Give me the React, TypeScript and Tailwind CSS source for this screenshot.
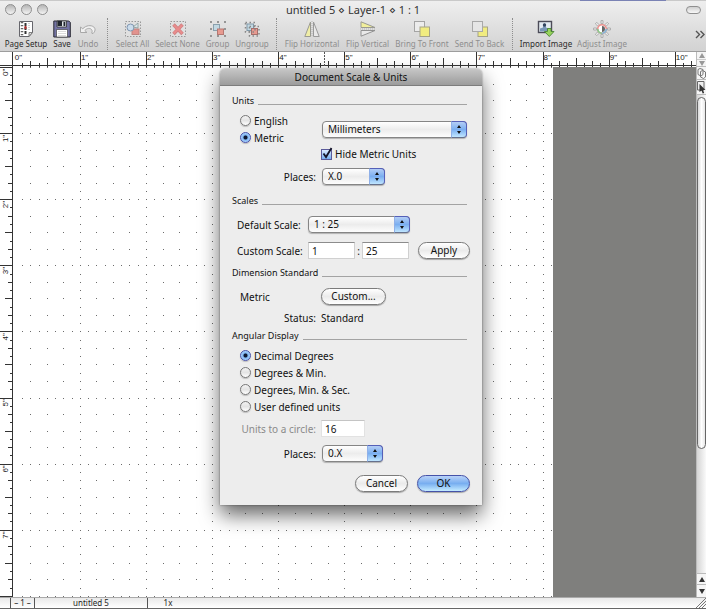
import React, { useState } from "react";

const INCH = 66.1;
const ORIGIN_X = 13.8;
const RULER_LEFT = 13;

/* ---------- Toolbar icons ---------- */

const PageSetupIcon = () => (
  <svg width="18" height="18" viewBox="0 0 18 18">
    <path d="M2.500 1.500h13v11l-3.500 4h-9.500z" fill="#fff" stroke="#66666c" />
    <path d="M15.500 12.500l-3.500 4v-4z" fill="#ddd" stroke="#666" strokeWidth=".8" />
    <path d="M5 2v14" stroke="#666" strokeWidth="2.500" strokeDasharray="1.200 1.800" />
    <path d="M8.500 3v11" stroke="#333" strokeWidth="2" strokeDasharray="3 1" />
    <path d="M8.500 6v3" stroke="#b03030" strokeWidth="2" />
    <path d="M12 3v8" stroke="#aaa" strokeDasharray="1 1" />
  </svg>
);

const SaveIcon = () => (
  <svg width="18" height="18" viewBox="0 0 18 18">
    <path d="M.8 1h15l1.500 1.500V17H.8z" fill="#7474a4" stroke="#2a2a34" />
    <path d="M4 1h9.500v6H4z" fill="#dfe5e8" stroke="#333" strokeWidth=".8" />
    <path d="M4.500 1h4.500v5H4.500z" fill="#20242c" />
    <path d="M10.500 2h1.800v4h-1.800z" fill="#20242c" />
    <path d="M3.500 9.500h11V17h-11z" fill="#fff" stroke="#333" strokeWidth=".6" />
    <path d="M5 11.500h8M5 13.500h8M5 15.500h8" stroke="#ccc" strokeWidth=".7" />
  </svg>
);

const UndoIcon = () => (
  <svg width="18" height="18" viewBox="0 0 18 18">
    <path
      d="M1.500 7v5.500h6.500L5.800 10.500C8 8 11 7.800 12.500 9.500c.8 1 .8 2.300.2 3.600l1.300.5c2.300-2.300 2.800-4.800.8-6.600C12 4.800 7 5.200 3.800 8.800z"
      fill="#f1f1f1"
      stroke="#a8a8a8"
    />
  </svg>
);

const SelectAllIcon = () => (
  <svg width="18" height="18" viewBox="0 0 18 18">
    <rect x="1.500" y="1.500" width="15" height="15" fill="#e0e0e0" stroke="#999" strokeDasharray="1.500 1.500" />
    <rect x="8" y="9" width="7" height="5.500" fill="#e2928e" stroke="#c08480" />
    <circle cx="6.500" cy="7.500" r="3.500" fill="#cbdcec" stroke="#7f96b0" />
    <path d="M9 7l5-4v5z" fill="#d8e4e8" stroke="#899" strokeWidth=".8" />
  </svg>
);

const SelectNoneIcon = () => (
  <svg width="18" height="18" viewBox="0 0 18 18">
    <rect x="1.500" y="1.500" width="15" height="15" fill="#e0e0e0" stroke="#999" strokeDasharray="1.500 1.500" />
    <path d="M4.500 4.500l9 9.500M13.500 4.500l-9 9.500" stroke="#cf8082" strokeWidth="3.500" />
    <path d="M4.800 5l8.500 8.500M13.200 5l-8.500 8.500" stroke="#e88c8c" strokeWidth="2" />
  </svg>
);

const GroupIcon = () => (
  <svg width="18" height="18" viewBox="0 0 18 18">
    <rect x="4.500" y="4.500" width="6" height="6" fill="#c2d8e2" stroke="#8aa0ad" />
    <rect x="8.500" y="9" width="6" height="5.500" fill="#e79a90" stroke="#b57872" />
    <path
      d="M1 1h2v2H1zM8 1h2v2H8zM15 1h2v2h-2zM1 8h2v2H1zM15 8h2v2h-2zM1 15h2v2H1zM8 15h2v2H8zM15 15h2v2h-2z"
      fill="#959595"
    />
  </svg>
);

const UngroupIcon = () => (
  <svg width="18" height="18" viewBox="0 0 18 18">
    <rect x="4" y="4" width="6.500" height="6.500" fill="#c2d8e2" stroke="#8098a8" />
    <rect x="8.500" y="8.500" width="6" height="6" fill="#e79a90" stroke="#a5706c" />
    <rect x="2.500" y="2.500" width="9.500" height="9.500" fill="none" stroke="#888" strokeWidth="1.500" strokeDasharray="1.500 2.500" />
    <rect x="6.500" y="6.500" width="9.500" height="9.500" fill="none" stroke="#888" strokeWidth="1.500" strokeDasharray="1.500 2.500" />
  </svg>
);

const FlipHIcon = () => (
  <svg width="18" height="18" viewBox="0 0 18 18">
    <path d="M7.500 2v14.500H1.800z" fill="#efeda6" stroke="#9a9a92" />
    <path d="M10.500 2v14.500h5.700z" fill="#e9e9e9" stroke="#9a9a9a" />
    <path d="M9 1v16" stroke="#b5b5b5" strokeDasharray="1 1" />
  </svg>
);

const FlipVIcon = () => (
  <svg width="18" height="18" viewBox="0 0 18 18">
    <path d="M2 7.500V1.800l14 5.700z" fill="#f1ef9c" stroke="#9a9a92" />
    <path d="M2 10.500v5.700l14-5.700z" fill="#e9e9e9" stroke="#929292" />
    <path d="M1 9h16" stroke="#b5b5b5" strokeDasharray="1 1" />
  </svg>
);

const FrontIcon = () => (
  <svg width="18" height="18" viewBox="0 0 18 18">
    <rect x="1.500" y="1.500" width="10" height="10" fill="#ececec" stroke="#a4a4a4" />
    <rect x="7" y="7" width="9.500" height="9.500" fill="#f1ec80" stroke="#a5a388" />
  </svg>
);

const BackIcon = () => (
  <svg width="18" height="18" viewBox="0 0 18 18">
    <rect x="7" y="7" width="9.500" height="9.500" fill="#f1ec80" stroke="#a5a388" />
    <rect x="1.500" y="1.500" width="10" height="10" fill="#e6e6e6" stroke="#a8a8a8" />
  </svg>
);

const ImportIcon = () => (
  <svg width="18" height="18" viewBox="0 0 18 18">
    <rect x="1.500" y="1.500" width="13" height="11" fill="#e4ebf2" stroke="#4c4c58" strokeWidth="1.400" />
    <path d="M3 11.500V8.500l3-1V4.500q1.500-2 3 0V7.500l3 1v3z" fill="#7a98b8" />
    <circle cx="7.500" cy="5" r="1.700" fill="#34455e" />
    <path d="M10.500 8.500h3.500v3h3L12.300 16.500l-4.800-5h3z" fill="#98d45c" stroke="#4a8434" strokeWidth=".9" />
  </svg>
);

const AdjustIcon = () => (
  <svg width="18" height="18" viewBox="0 0 18 18">
    {[0, 45, 90, 135, 180, 225, 270, 315].map((a) => (
      <path key={a} d="M8 .6h2v3H8z" fill="#eee" stroke="#a0a0a0" strokeWidth=".8" transform={`rotate(${a} 9 9)`} />
    ))}
    <circle cx="9" cy="9" r="4.300" fill="#fff" stroke="#eb8f8c" strokeWidth="1.600" />
    <path d="M4.700 9A4.300 4.300 0 0 0 9 13.300" fill="none" stroke="#86c98c" strokeWidth="1.600" />
    <path d="M13.300 9A4.300 4.300 0 0 1 9 13.300" fill="none" stroke="#7fb8dc" strokeWidth="1.600" />
    <path d="M9 6a3 3 0 0 1 0 6z" fill="#666" />
  </svg>
);

type Tool = { label: string; icon: () => React.JSX.Element; width: string; enabled?: boolean };

const toolGroups: Tool[][] = [
  [
    { label: "Page Setup", icon: PageSetupIcon, width: "w-12", enabled: true },
    { label: "Save", icon: SaveIcon, width: "w-6", enabled: true },
    { label: "Undo", icon: UndoIcon, width: "w-7" },
  ],
  [
    { label: "Select All", icon: SelectAllIcon, width: "w-[41px]" },
    { label: "Select None", icon: SelectNoneIcon, width: "w-[49px]" },
    { label: "Group", icon: GroupIcon, width: "w-[31px]" },
    { label: "Ungroup", icon: UngroupIcon, width: "w-[38px]" },
  ],
  [
    { label: "Flip Horizontal", icon: FlipHIcon, width: "w-[62px]" },
    { label: "Flip Vertical", icon: FlipVIcon, width: "w-[49px]" },
    { label: "Bring To Front", icon: FrontIcon, width: "w-[60px]" },
    { label: "Send To Back", icon: BackIcon, width: "w-[55px]" },
  ],
  [
    { label: "Import Image", icon: ImportIcon, width: "w-[58px]", enabled: true },
    { label: "Adjust Image", icon: AdjustIcon, width: "w-[54px]" },
  ],
];

function Header() {
  return (
    <header className="shrink-0 border-b border-[#9d9d9d] bg-linear-to-b from-[#efefef] to-[#d2d2d2]">
      <div className="flex h-px justify-end bg-[#c9c9c9] pr-10">
        <div className="w-[86px] bg-[#7a82b4]" />
      </div>
      <div className="grid h-[17px] grid-cols-[1fr_auto_1fr] items-center px-[5px]">
        <div className="flex gap-[5px]">
          {["Close", "Minimize", "Zoom"].map((n) => (
            <button
              key={n}
              aria-label={n}
              className="size-[11px] rounded-full border border-[#8f8f8f] bg-linear-to-b from-[#b5b5b5] to-[#f4f4f4]"
            />
          ))}
        </div>
        <h1 className="text-[11px] leading-4 whitespace-nowrap text-[#333]">untitled 5 ⋄ Layer-1 ⋄ 1 : 1</h1>
        <button
          aria-label="Toggle toolbar"
          className="h-2 w-[15px] justify-self-end rounded-full border border-[#8f8f8f] bg-linear-to-b from-[#d0d0d0] to-[#f8f8f8]"
        />
      </div>
      <div className="flex h-[33px] items-start overflow-hidden pl-[2px]">
        {toolGroups.map((group, i) => (
          <React.Fragment key={i}>
            {i > 0 && <div className="mr-1 ml-[5px] h-8 shrink-0 border-l border-dotted border-[#8d8d8d]" />}
            {group.map(({ label, icon: Icon, width, enabled }) => (
              <button
                key={label}
                disabled={!enabled}
                className={`flex shrink-0 flex-col items-center pt-[2px] ${width} ${enabled ? "text-[#2a2a2a]" : "text-[#8e8e8e]"}`}
              >
                <Icon />
                <span className="text-[8px] leading-[11px] whitespace-nowrap">{label}</span>
              </button>
            ))}
          </React.Fragment>
        ))}
        <button aria-label="More tools" className="mt-3 mr-px ml-auto shrink-0">
          <svg width="10" height="9" viewBox="0 0 10 9" fill="none" stroke="#555" strokeWidth="1.400">
            <path d="M1 1l3.500 3.500L1 8M5.500 1L9 4.500 5.500 8" />
          </svg>
        </button>
      </div>
    </header>
  );
}

/* ---------- Drawing area ---------- */

const tickLength = (i: number) => (i % 8 === 0 ? 14 : i % 4 === 0 ? 8 : i % 2 === 0 ? 5 : 3);

function HorizontalRuler() {
  return (
    <svg className="block h-[15px] w-full bg-white font-['Liberation_Sans',sans-serif]" aria-hidden="true">
      <rect x="0" y="13" width="100%" height="1" fill="#333" />
      {Array.from({ length: 160 }, (_, i) => (
        <rect
          key={i}
          x={i === 0 ? 12 : Math.round(ORIGIN_X + (i * INCH) / 8)}
          y={14 - tickLength(i)}
          width="1"
          height={tickLength(i) + 1}
          fill="#333"
        />
      ))}
      {Array.from({ length: 11 }, (_, n) => (
        <text key={n} x={ORIGIN_X + n * INCH + 1} y="8" fontSize="8" fill="#222">{`${n}"`}</text>
      ))}
      <path d="M324.500 0v14" stroke="#555" strokeDasharray="2 1" />
    </svg>
  );
}

function VerticalRuler() {
  return (
    <svg className="block h-full w-[13px] shrink-0 bg-white font-['Liberation_Sans',sans-serif]" aria-hidden="true">
      <rect x="12" y="0" width="1" height="100%" fill="#333" />
      {Array.from({ length: 120 }, (_, i) => (
        <rect key={i} x={13 - tickLength(i)} y={Math.round((i * INCH) / 8)} width={tickLength(i)} height="1" fill="#333" />
      ))}
      {Array.from({ length: 8 }, (_, n) => (
        <text key={n} transform={`translate(8 ${n * INCH + 9}) rotate(-90)`} fontSize="8" fill="#222">{`${n}"`}</text>
      ))}
    </svg>
  );
}

function Paper() {
  const dots: React.JSX.Element[] = [];
  for (let r = 0; r < 112; r++) {
    for (let c = 1; c < 66; c++) {
      const onInch = r % 8 === 0 || c % 8 === 0;
      if (onInch || (r % 2 === 0 && c % 2 === 0)) {
        dots.push(
          <rect
            key={`${r}-${c}`}
            x={Math.round((c * INCH) / 8 + ORIGIN_X - RULER_LEFT)}
            y={Math.round((r * INCH) / 8)}
            width="1"
            height="1"
            fill="#6b6b6b"
          />,
        );
      }
    }
  }
  return (
    <svg className="h-full w-[540px] shrink-0 bg-white" aria-hidden="true">
      {dots}
    </svg>
  );
}

const Arrow = ({ up, dim }: { up?: boolean; dim?: boolean }) => (
  <svg width="6" height="5" viewBox="0 0 6 5" fill={dim ? "#999" : "#333"}>
    {up ? <path d="M3 0l3 5H0z" /> : <path d="M0 0h6L3 5z" />}
  </svg>
);

function ScrollColumn() {
  return (
    <div className="flex w-[10px] shrink-0 flex-col border-l border-[#bbb] bg-[#f5f5f5]">
      <button aria-label="Previous layer" className="flex h-2 items-center justify-center border-b border-[#ccc]">
        <Arrow up dim />
      </button>
      <button aria-label="Next layer" className="flex h-[7px] items-center justify-center border-b border-[#bbb]">
        <Arrow dim />
      </button>
      <button aria-label="Pages" className="flex h-[13px] items-center justify-center border-b border-[#bbb]">
        <svg width="9" height="11" viewBox="0 0 9 11" fill="#f7f7f7" stroke="#777">
          <path d="M1 1.500l2-1 3 1v5L4 8 1 6.500zM3.500 3.500l2-1 3 1.500v5l-2 1.500-3-1.500z" />
        </svg>
      </button>
      <button aria-label="Pick layer" className="flex h-[15px] items-center justify-center border-b border-[#bbb]">
        <svg width="9" height="13" viewBox="0 0 9 13">
          <path d="M.500.500h6.500v8.500H.500z" fill="#eee" stroke="#666" />
          <path d="M2.500 3v8l2-1.500 1.200 3 1.500-.6L6 9h2.500z" fill="#333" />
        </svg>
      </button>
      <div className="flex grow flex-col bg-linear-to-r from-[#d5d5d5] to-[#fafafa] pt-[2px]">
        <div className="h-[352px] rounded-full border border-[#666] bg-linear-to-r from-[#d8d8d8] via-[#fff] to-[#e8e8e8]" />
      </div>
      <button aria-label="Scroll up" className="flex h-3 items-center justify-center border-y border-[#bbb]">
        <Arrow up />
      </button>
      <button aria-label="Scroll down" className="flex h-3 items-center justify-center">
        <Arrow />
      </button>
    </div>
  );
}

function StatusBar() {
  return (
    <footer className="flex h-3 shrink-0 items-stretch border-t border-b border-t-[#aaa] border-b-[#666] bg-linear-to-b from-[#e9e9e9] to-[#fff] text-[8px] leading-[10px] text-[#222]">
      <div className="w-[11px] border-r border-[#555]" />
      <div className="w-6 border-r border-[#555] text-center whitespace-nowrap">– 1 –</div>
      <div className="w-[113px] border-r border-[#555] text-center">untitled 5</div>
      <div className="w-10 text-center">1x</div>
      <svg className="ml-auto" width="10" height="10" viewBox="0 0 10 10" stroke="#777" aria-hidden="true">
        <path d="M0 10L10 0M3 10l7-7M6 10l4-4" />
      </svg>
    </footer>
  );
}

/* ---------- Dialog controls ---------- */

function SectionTitle({ children }: { children: React.ReactNode }) {
  return (
    <div className="flex h-4 items-center">
      <h3 className="text-[9px] leading-4 whitespace-nowrap">{children}</h3>
      <div className="mt-[7px] ml-1 h-px grow bg-[#a3a3a3]" />
    </div>
  );
}

function Popup({ id, label, value, width }: { id: string; label?: string; value: string; width: string }) {
  return (
    <div className={`relative h-[17px] shrink-0 ${width}`}>
      <select
        id={id}
        aria-label={label}
        className="block h-full w-full appearance-none rounded-[4px] border border-[#858585] bg-linear-to-b from-[#fff] via-[#ececec] to-[#fdfdfd] pr-4 pl-[5px] leading-[15px] shadow-[0_1px_1px_rgba(0,0,0,0.25)] outline-none"
      >
        <option>{value}</option>
      </select>
      <span className="pointer-events-none absolute inset-y-0 right-0 flex w-4 flex-col items-center justify-center rounded-r-[4px] border border-[#5560b8] border-b-[#66708c] border-l-[#8fb0e8] bg-linear-to-b from-[#b3cdf5] via-[#7aaef0] to-[#c0e6ff]">
        <svg width="4" height="9" viewBox="0 0 4 9" fill="#111">
          <path d="M2 0l2 3H0zM2 9l2-3H0z" />
        </svg>
      </span>
    </div>
  );
}

function Radio({ name, label, checked, onChange }: { name: string; label: string; checked: boolean; onChange: () => void }) {
  return (
    <label className="flex h-[17px] items-center gap-[3px] whitespace-nowrap">
      <input
        type="radio"
        name={name}
        checked={checked}
        onChange={onChange}
        className="size-[11px] shrink-0 appearance-none rounded-full border border-[#777] bg-linear-to-b from-[#f2f2f2] via-[#e4e4e4] to-[#fff] shadow-[0_1px_1px_rgba(0,0,0,0.2)] checked:border-[#4650a8] checked:bg-[radial-gradient(circle_at_center,#101830_0_1.5px,#7fb4f2_2.5px,#b5dcff_5px)]"
      />
      {label}
    </label>
  );
}

const buttonBase = "h-[17px] shrink-0 rounded-full border leading-[15px] shadow-[0_1px_1px_rgba(0,0,0,0.3)]";
const plainButton = "border-[#7b7b7b] bg-linear-to-b from-[#fff] via-[#ebebeb] to-[#fff]";
const inputBase = "h-[17px] border border-[#d0d0d0] border-t-[#8c8c8c] bg-white px-[3px] leading-[15px] outline-none";

function ScaleDialog() {
  const [system, setSystem] = useState("Metric");
  const [angle, setAngle] = useState("Decimal Degrees");
  return (
    <section
      role="dialog"
      aria-labelledby="dialog-title"
      className="absolute top-[69px] left-[220px] w-[262px] rounded-t-[5px] bg-[#ededed] text-[10px] leading-4 text-[#111] shadow-[0_10px_20px_rgba(0,0,0,0.6),0_0_2px_rgba(0,0,0,0.5)]"
    >
      <h2
        id="dialog-title"
        className="h-[17px] rounded-t-[5px] border-b border-[#7d7d7d] bg-linear-to-b from-[#c6c6c6] to-[#9c9c9c] text-center leading-4"
      >
        Document Scale &amp; Units
      </h2>
      <form className="flex flex-col px-3 pt-[7px] pb-[13px]" onSubmit={(e) => e.preventDefault()}>
        <div className="mr-[3px] flex flex-col">
          <SectionTitle>Units</SectionTitle>
          <div className="mt-[3px] flex items-center pl-2">
            <div className="w-[82px]">
              {["English", "Metric"].map((s) => (
                <Radio key={s} name="system" label={s} checked={system === s} onChange={() => setSystem(s)} />
              ))}
            </div>
            <Popup id="unit" label="Unit" value="Millimeters" width="w-[145px]" />
          </div>
          <label className="ml-[89px] flex h-4 items-center gap-[3px]">
            <span className="relative block size-[11px]">
              <input
                type="checkbox"
                defaultChecked
                className="peer block size-[11px] appearance-none border border-[#5a5a9a] bg-linear-to-b from-[#dcebff] to-[#74aef0]"
              />
              <svg
                className="pointer-events-none absolute bottom-[1px] left-[1px] hidden peer-checked:block"
                width="11"
                height="12"
                viewBox="0 0 11 12"
                fill="none"
                stroke="#15152a"
                strokeWidth="1.800"
              >
                <path d="M1.500 6.500L4 10 9.500 1" />
              </svg>
            </span>
            Hide Metric Units
          </label>
          <div className="mt-[6px] flex items-center">
            <label htmlFor="linear-places" className="mr-[6px] w-[84px] text-right">Places:</label>
            <Popup id="linear-places" value="X.0" width="w-[63px]" />
          </div>
          <div className="mt-2">
            <SectionTitle>Scales</SectionTitle>
          </div>
        </div>
        <div className="mt-[7px] flex items-center">
          <label htmlFor="default-scale" className="w-[76px] pl-[5px] whitespace-nowrap">Default Scale:</label>
          <Popup id="default-scale" value="1 : 25" width="w-[102px]" />
        </div>
        <div className="mt-[9px] flex items-center">
          <label htmlFor="scale-from" className="w-[76px] pl-[5px] whitespace-nowrap">Custom Scale:</label>
          <input id="scale-from" defaultValue="1" className={`w-[47px] ${inputBase}`} />
          <span className="w-[7px] text-center">:</span>
          <input aria-label="Scale to" defaultValue="25" className={`w-[47px] ${inputBase}`} />
          <button type="button" className={`ml-[9px] w-[52px] ${buttonBase} ${plainButton}`}>Apply</button>
        </div>
        <div className="mt-[6px] mr-[3px]">
          <SectionTitle>Dimension Standard</SectionTitle>
        </div>
        <div className="mt-[7px] flex items-center pl-2">
          <span className="w-[81px]">Metric</span>
          <button type="button" className={`w-[65px] ${buttonBase} ${plainButton}`}>Custom...</button>
        </div>
        <div className="mt-[5px] flex">
          <span className="mr-[5px] w-[84px] text-right">Status:</span>
          <span>Standard</span>
        </div>
        <div className="mt-[2px] mr-[3px]">
          <SectionTitle>Angular Display</SectionTitle>
        </div>
        <div className="mt-[3px] pl-2">
          {["Decimal Degrees", "Degrees & Min.", "Degrees, Min. & Sec.", "User defined units"].map((a) => (
            <Radio key={a} name="angle" label={a} checked={angle === a} onChange={() => setAngle(a)} />
          ))}
        </div>
        <div className="mt-[5px] flex items-center">
          <label htmlFor="circle-units" className="mr-[5px] w-[84px] text-right whitespace-nowrap text-[#8a8a8a]">Units to a circle:</label>
          <input
            id="circle-units"
            defaultValue="16"
            className="h-[17px] w-11 border border-[#e2e2e2] border-t-[#c4c4c4] bg-white px-[3px] leading-[15px] outline-none"
          />
        </div>
        <div className="mt-2 flex items-center">
          <label htmlFor="angle-places" className="mr-[6px] w-[84px] text-right">Places:</label>
          <Popup id="angle-places" value="0.X" width="w-[61px]" />
        </div>
        <div className="mt-[13px] flex justify-end gap-[9px]">
          <button type="button" className={`w-[53px] ${buttonBase} ${plainButton}`}>Cancel</button>
          <button type="submit" className={`w-[53px] border-[#4552a8] bg-linear-to-b from-[#b9d2f8] via-[#78aef0] to-[#c4ebff] ${buttonBase}`}>
            OK
          </button>
        </div>
      </form>
    </section>
  );
}

export default function App() {
  return (
    <main className="relative flex h-screen flex-col overflow-hidden bg-white font-['Noto_Sans','Open_Sans',sans-serif]">
      <Header />
      <div className="flex min-h-0 grow">
        <div className="flex min-w-0 grow flex-col">
          <HorizontalRuler />
          <div className="flex min-h-0 grow">
            <VerticalRuler />
            <Paper />
            <div className="grow bg-[#7f7f7d]" />
          </div>
        </div>
        <ScrollColumn />
      </div>
      <StatusBar />
      <ScaleDialog />
    </main>
  );
}
